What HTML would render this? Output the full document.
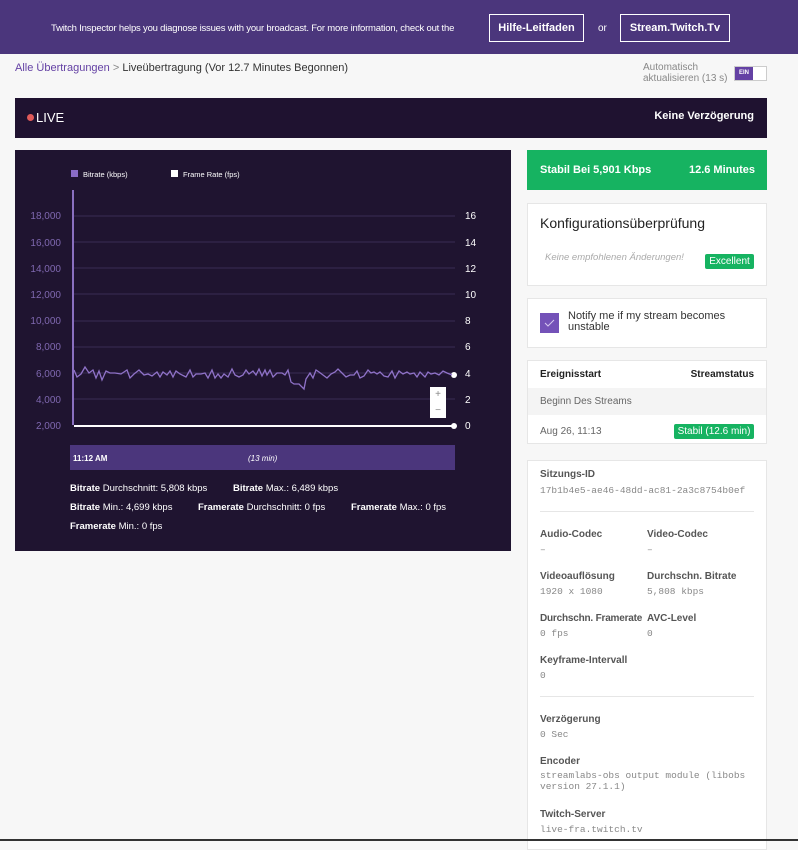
<!DOCTYPE html>
<html><head><meta charset="utf-8"><style>
*{margin:0;padding:0;box-sizing:border-box}
body{width:798px;height:841px;background:#f7f7f7;font-family:"Liberation Sans",Arial,sans-serif;position:relative;overflow:hidden}
.a{position:absolute;white-space:nowrap}
.banner{left:0;top:0;width:798px;height:54px;background:#4b367c}
.btn{border:1px solid #fff;color:#fff;font-size:11px;font-weight:bold;height:28px;line-height:26px;text-align:center}
.card{background:#fff;border:1px solid #e6e6e6}
.lbl{font-size:10px;font-weight:bold;color:#555}
.val{font-family:"Liberation Mono",monospace;font-size:9.5px;color:#888}
.pill{background:#16b361;color:#fff;font-size:10px;border-radius:2px;height:15px;line-height:15px;text-align:center}
</style></head><body>
<div class="a banner"></div>
<div class="a" style="left:51px;top:23px;color:#fff;font-size:9.5px;letter-spacing:-0.2px">Twitch Inspector helps you diagnose issues with your broadcast. For more information, check out the</div>
<div class="a btn" style="left:489px;top:14px;width:95px">Hilfe-Leitfaden</div>
<div class="a" style="left:598px;top:23px;color:#fff;font-size:10px">or</div>
<div class="a btn" style="left:620px;top:14px;width:110px">Stream.Twitch.Tv</div>

<div class="a" style="left:15px;top:62px;font-size:11px;color:#333"><span style="color:#6441a4">Alle Übertragungen</span> <span style="color:#888">&gt;</span> Liveübertragung (Vor 12.7 Minutes Begonnen)</div>
<div class="a" style="left:643px;top:62px;font-size:10px;color:#888;line-height:11px">Automatisch<br>aktualisieren (13 s)</div>
<div class="a" style="left:734px;top:66px;width:33px;height:15px;border:1px solid #ccc;background:#fff"><div style="width:18px;height:13px;background:#6441a4;color:#fff;font-size:6px;font-weight:bold;text-align:center;line-height:13px">EIN</div></div>

<div class="a" style="left:15px;top:98px;width:752px;height:40px;background:#1f1230"></div>
<div class="a" style="left:27px;top:114px;width:7px;height:7px;border-radius:50%;background:#e05a5a"></div>
<div class="a" style="left:36px;top:110px;color:#fff;font-size:13px">LIVE</div>
<div class="a" style="right:44px;top:110px;color:#fff;font-size:11px;font-weight:bold">Keine Verzögerung</div>

<div class="a" style="left:15px;top:150px;width:496px;height:401px;background:#1f1430"></div>
<svg class="a" style="left:0;top:0" width="520" height="560">
<g stroke="#3a2d55" stroke-width="1">
<line x1="73" y1="216" x2="455" y2="216"/><line x1="73" y1="242" x2="455" y2="242"/><line x1="73" y1="268" x2="455" y2="268"/><line x1="73" y1="294" x2="455" y2="294"/><line x1="73" y1="321" x2="455" y2="321"/><line x1="73" y1="347" x2="455" y2="347"/><line x1="73" y1="373" x2="455" y2="373"/><line x1="73" y1="399" x2="455" y2="399"/>
</g>
<line x1="73" y1="190" x2="73" y2="425" stroke="#8a70c0" stroke-width="2"/>
<line x1="74" y1="426" x2="454" y2="426" stroke="#fff" stroke-width="2"/>
<circle cx="454" cy="426" r="3" fill="#fff"/><circle cx="454" cy="375" r="3" fill="#fff"/>
<polyline fill="none" stroke="#8f72c8" stroke-width="1.3" points="74,370 77,377 81,374 85,367 89,373 93,370 96,378 99,371 102,380 106,371 110,373 115,373 121,374 127,370 130,378 134,374 139,370 144,375 148,374 152,376 157,372 160,377 163,372 167,375 170,371 173,377 176,371 180,374 186,377 190,370 193,377 196,374 201,374 205,373 208,378 212,370 215,378 218,374 221,378 224,374 228,377 232,369 235,375 239,377 243,375 246,370 249,374 253,371 256,375 259,369 262,376 265,370 267,375 270,370 273,377 277,373 282,373 285,375 288,370 291,382 294,384 299,384 304,389 306,379 310,373 313,378 316,370 319,372 323,375 327,378 331,374 335,372 338,369 342,373 346,377 350,375 354,375 357,371 360,378 364,376 368,370 371,373 374,372 377,374 380,372 384,376 388,377 392,371 395,378 399,371 403,374 407,372 410,374 414,373 417,377 420,372 425,377 428,372 431,374 435,373 439,375 443,371 447,373 452,375"/>
<rect x="430" y="387" width="16" height="31" fill="#fff"/>
<text x="438" y="397" font-size="10" fill="#888" text-anchor="middle" font-family="Liberation Sans">+</text>
<text x="438" y="413" font-size="10" fill="#888" text-anchor="middle" font-family="Liberation Sans">−</text>
<g font-family="Liberation Sans" font-size="10" fill="#7f68b0" text-anchor="end">
<text x="61" y="219">18,000</text><text x="61" y="246">16,000</text><text x="61" y="272">14,000</text><text x="61" y="298">12,000</text><text x="61" y="324">10,000</text><text x="61" y="350">8,000</text><text x="61" y="377">6,000</text><text x="61" y="403">4,000</text><text x="61" y="429">2,000</text>
</g>
<g font-family="Liberation Sans" font-size="10" fill="#fff">
<text x="465" y="219">16</text><text x="465" y="246">14</text><text x="465" y="272">12</text><text x="465" y="298">10</text><text x="465" y="324">8</text><text x="465" y="350">6</text><text x="465" y="377">4</text><text x="465" y="403">2</text><text x="465" y="429">0</text>
</g>
<rect x="71" y="170" width="7" height="7" fill="#8a6cc6"/>
<text x="83" y="177" font-size="7.5" fill="#fff" font-family="Liberation Sans">Bitrate (kbps)</text>
<rect x="171" y="170" width="7" height="7" fill="#fff"/>
<text x="183" y="177" font-size="7.5" fill="#fff" font-family="Liberation Sans">Frame Rate (fps)</text>
<rect x="70" y="445" width="385" height="25" fill="#4b367c"/>
<text x="73" y="461" font-size="8" font-weight="bold" fill="#fff" font-family="Liberation Sans">11:12 AM</text>
<text x="248" y="461" font-size="8" font-style="italic" fill="#fff" font-family="Liberation Sans">(13 min)</text>
<g font-family="Liberation Sans" font-size="9.5" fill="#fff">
<text x="70" y="491"><tspan font-weight="bold">Bitrate</tspan> Durchschnitt: 5,808 kbps</text>
<text x="233" y="491"><tspan font-weight="bold">Bitrate</tspan> Max.: 6,489 kbps</text>
<text x="70" y="510"><tspan font-weight="bold">Bitrate</tspan> Min.: 4,699 kbps</text>
<text x="198" y="510"><tspan font-weight="bold">Framerate</tspan> Durchschnitt: 0 fps</text>
<text x="351" y="510"><tspan font-weight="bold">Framerate</tspan> Max.: 0 fps</text>
<text x="70" y="529"><tspan font-weight="bold">Framerate</tspan> Min.: 0 fps</text>
</g>
</svg>

<div class="a" style="left:527px;top:150px;width:240px;height:40px;background:#16b361"></div>
<div class="a" style="left:540px;top:164px;color:#fff;font-size:11px;font-weight:bold">Stabil Bei 5,901 Kbps</div>
<div class="a" style="right:43px;top:164px;color:#fff;font-size:11px;font-weight:bold">12.6 Minutes</div>

<div class="a card" style="left:527px;top:203px;width:240px;height:83px"></div>
<div class="a" style="left:540px;top:215px;font-size:14px;color:#222">Konfigurationsüberprüfung</div>
<div class="a" style="left:545px;top:252px;font-size:9.5px;color:#aaa;font-style:italic">Keine empfohlenen Änderungen!</div>
<div class="a pill" style="left:705px;top:254px;width:49px">Excellent</div>

<div class="a card" style="left:527px;top:298px;width:240px;height:50px"></div>
<div class="a" style="left:540px;top:313px;width:19px;height:20px;background:#7452b8"><svg width="19" height="20"><path d="M5 10 L8 13 L14 7" stroke="#d6c8ef" stroke-width="1" fill="none"/></svg></div>
<div class="a" style="left:568px;top:311px;font-size:11px;color:#333;line-height:11px">Notify me if my stream becomes<br>unstable</div>

<div class="a card" style="left:527px;top:360px;width:240px;height:84px"></div>
<div class="a" style="left:528px;top:388px;width:238px;height:27px;background:#f4f4f4"></div>
<div class="a" style="left:540px;top:369px;font-size:10px;font-weight:bold;color:#222">Ereignisstart</div>
<div class="a" style="right:44px;top:369px;font-size:10px;font-weight:bold;color:#222">Streamstatus</div>
<div class="a" style="left:540px;top:396px;font-size:10px;color:#666">Beginn Des Streams</div>
<div class="a" style="left:540px;top:426px;font-size:10px;color:#666">Aug 26, 11:13</div>
<div class="a pill" style="left:674px;top:424px;width:80px">Stabil (12.6 min)</div>

<div class="a card" style="left:527px;top:460px;width:240px;height:390px"></div>
<div class="a lbl" style="left:540px;top:469px">Sitzungs-ID</div>
<div class="a val" style="left:540px;top:485px">17b1b4e5-ae46-48dd-ac81-2a3c8754b0ef</div>
<div class="a" style="left:540px;top:511px;width:214px;height:1px;background:#e6e6e6"></div>
<div class="a lbl" style="left:540px;top:529px">Audio-Codec</div><div class="a val" style="left:540px;top:544px">–</div>
<div class="a lbl" style="left:647px;top:529px">Video-Codec</div><div class="a val" style="left:647px;top:544px">–</div>
<div class="a lbl" style="left:540px;top:571px">Videoauflösung</div><div class="a val" style="left:540px;top:586px">1920 x 1080</div>
<div class="a lbl" style="left:647px;top:571px">Durchschn. Bitrate</div><div class="a val" style="left:647px;top:586px">5,808 kbps</div>
<div class="a lbl" style="left:540px;top:613px;letter-spacing:-0.2px">Durchschn. Framerate</div><div class="a val" style="left:540px;top:628px">0 fps</div>
<div class="a lbl" style="left:647px;top:613px">AVC-Level</div><div class="a val" style="left:647px;top:628px">0</div>
<div class="a lbl" style="left:540px;top:655px">Keyframe-Intervall</div><div class="a val" style="left:540px;top:670px">0</div>
<div class="a" style="left:540px;top:696px;width:214px;height:1px;background:#e6e6e6"></div>
<div class="a lbl" style="left:540px;top:714px">Verzögerung</div><div class="a val" style="left:540px;top:729px">0 Sec</div>
<div class="a lbl" style="left:540px;top:756px">Encoder</div>
<div class="a val" style="left:540px;top:770px;line-height:11px">streamlabs-obs output module (libobs<br>version 27.1.1)</div>
<div class="a lbl" style="left:540px;top:809px">Twitch-Server</div><div class="a val" style="left:540px;top:824px">live-fra.twitch.tv</div>
<div class="a" style="left:0;top:839px;width:798px;height:2px;background:#333"></div>
</body></html>
